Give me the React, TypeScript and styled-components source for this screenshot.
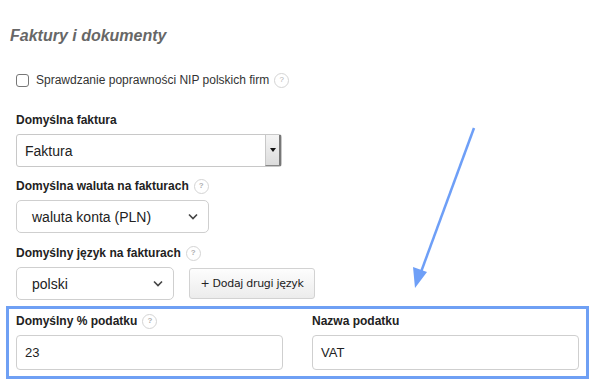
import styled, {createGlobalStyle} from "styled-components";

const Global = createGlobalStyle`
    body {
        margin: 0;
        background: #fff;
        font-family: "Liberation Sans", Arial, Helvetica, sans-serif;
        color: #333;
    }
`;

const Page = styled.div`
    position: relative;
    width: 595px;
    height: 383px;
    overflow: hidden;
    padding: 27px 0 0 0;
    box-sizing: border-box;
`;

const Title = styled.h2`
    margin: 0 0 0 10px;
    font-size: 16px;
    font-weight: bold;
    font-style: italic;
    color: #676767;
    line-height: 18px;
`;

const CheckRow = styled.label`
    display: flex;
    align-items: center;
    gap: 7px;
    margin: 28px 0 0 16px;
    font-size: 12px;
    color: #333;
    height: 14px;
`;

const Box = styled.span`
    width: 11px;
    height: 11px;
    border: 1px solid #777;
    border-radius: 3px;
    background: #fff;
`;

const Help = styled.span`
    display: inline-flex;
    align-items: center;
    justify-content: center;
    width: 13px;
    height: 13px;
    border: 1px solid #d4d4d4;
    border-radius: 50%;
    font-size: 8px;
    color: #b0b0b0;
    margin-left: 5px;
    vertical-align: middle;
    line-height: 1;
`;

const Field = styled.div<{ $top: number }>`
    margin: ${p => p.$top}px 0 0 16px;
    display: flex;
    flex-direction: column;
`;

const Label = styled.div`
    font-size: 12px;
    font-weight: bold;
    color: #222;
    height: 14px;
    line-height: 14px;
    margin-bottom: 7px;
    display: flex;
    align-items: center;
`;

const OldSelect = styled.div`
    width: 266px;
    height: 33px;
    box-sizing: border-box;
    border: 1px solid #c8c8c8;
    border-radius: 3px;
    display: flex;
    align-items: stretch;
    font-size: 14px;
    color: #222;
`;

const OldText = styled.span`
    flex: 1;
    display: flex;
    align-items: center;
    padding-left: 8px;
`;

const OldButton = styled.span`
    width: 13px;
    background: linear-gradient(#f4f4f4, #dcdcdc);
    border-left: 1px solid #c8c8c8;
    border-right: 2px solid #777;
    border-bottom: 1px solid #888;
    display: flex;
    align-items: center;
    justify-content: center;
    &::after {
        content: "";
        border-left: 3px solid transparent;
        border-right: 3px solid transparent;
        border-top: 4px solid #111;
    }
`;

const Select = styled.div<{ $w: number }>`
    width: ${p => p.$w}px;
    height: 33px;
    box-sizing: border-box;
    border: 1px solid #cfcfcf;
    border-radius: 5px;
    display: flex;
    align-items: center;
    justify-content: space-between;
    padding: 0 10px 0 15px;
    font-size: 14px;
    color: #222;
`;

const Row = styled.div`
    display: flex;
    align-items: center;
    gap: 15px;
`;

const Button = styled.button`
    width: 126px;
    height: 31px;
    border: 1px solid #d2d2d2;
    border-radius: 3px;
    background: linear-gradient(#fdfdfd, #ececec);
    font-family: "DejaVu Sans", Verdana, sans-serif;
    font-size: 11px;
    color: #222;
    padding: 0;
    letter-spacing: -0.3px;
`;

const Frame = styled.div`
    margin: 6px 0 0 6px;
    width: 583px;
    height: 73px;
    box-sizing: border-box;
    border: 3px solid #6fa0f4;
    padding: 5px 8px 0 7px;
    display: grid;
    grid-template-columns: 267px 267px;
    column-gap: 29px;
`;

const Input = styled.div`
    height: 35px;
    box-sizing: border-box;
    border: 1px solid #cfcfcf;
    border-radius: 4px;
    display: flex;
    align-items: center;
    padding-left: 8px;
    font-size: 13px;
    color: #222;
`;

const Col = styled.div`
    display: flex;
    flex-direction: column;
`;

const ArrowLayer = styled.svg`
    position: absolute;
    left: 0;
    top: 0;
    pointer-events: none;
`;

function Chevron() {
    return (
        <svg width="10" height="7" viewBox="0 0 10 7">
            <path d="M1 1.5 L5 5.5 L9 1.5" fill="none" stroke="#444" strokeWidth="1.6"/>
        </svg>
    );
}

export default function App() {
    return (
        <Page>
            <Global/>
            <Title>Faktury i dokumenty</Title>
            <CheckRow>
                <Box/>
                <span>Sprawdzanie poprawności NIP polskich firm</span>
                <Help style={{marginLeft: -2}}>?</Help>
            </CheckRow>

            <Field $top={26}>
                <Label>Domyślna faktura</Label>
                <OldSelect>
                    <OldText>Faktura</OldText>
                    <OldButton/>
                </OldSelect>
            </Field>

            <Field $top={12}>
                <Label>Domyślna waluta na fakturach<Help>?</Help></Label>
                <Select $w={193}>
                    <span>waluta konta (PLN)</span>
                    <Chevron/>
                </Select>
            </Field>

            <Field $top={13}>
                <Label>Domyślny język na fakturach<Help>?</Help></Label>
                <Row>
                    <Select $w={158}>
                        <span>polski</span>
                        <Chevron/>
                    </Select>
                    <Button>+ Dodaj drugi język</Button>
                </Row>
            </Field>

            <Frame>
                <Col>
                    <Label>Domyślny % podatku<Help>?</Help></Label>
                    <Input>23</Input>
                </Col>
                <Col>
                    <Label>Nazwa podatku</Label>
                    <Input>VAT</Input>
                </Col>
            </Frame>

            <ArrowLayer width="595" height="383" viewBox="0 0 595 383">
                <line x1="474" y1="128" x2="421" y2="272" stroke="#6e9ff7" strokeWidth="2.5"/>
                <polygon points="415,288 413,267 427,272" fill="#6e9ff7"/>
            </ArrowLayer>
        </Page>
    );
}
